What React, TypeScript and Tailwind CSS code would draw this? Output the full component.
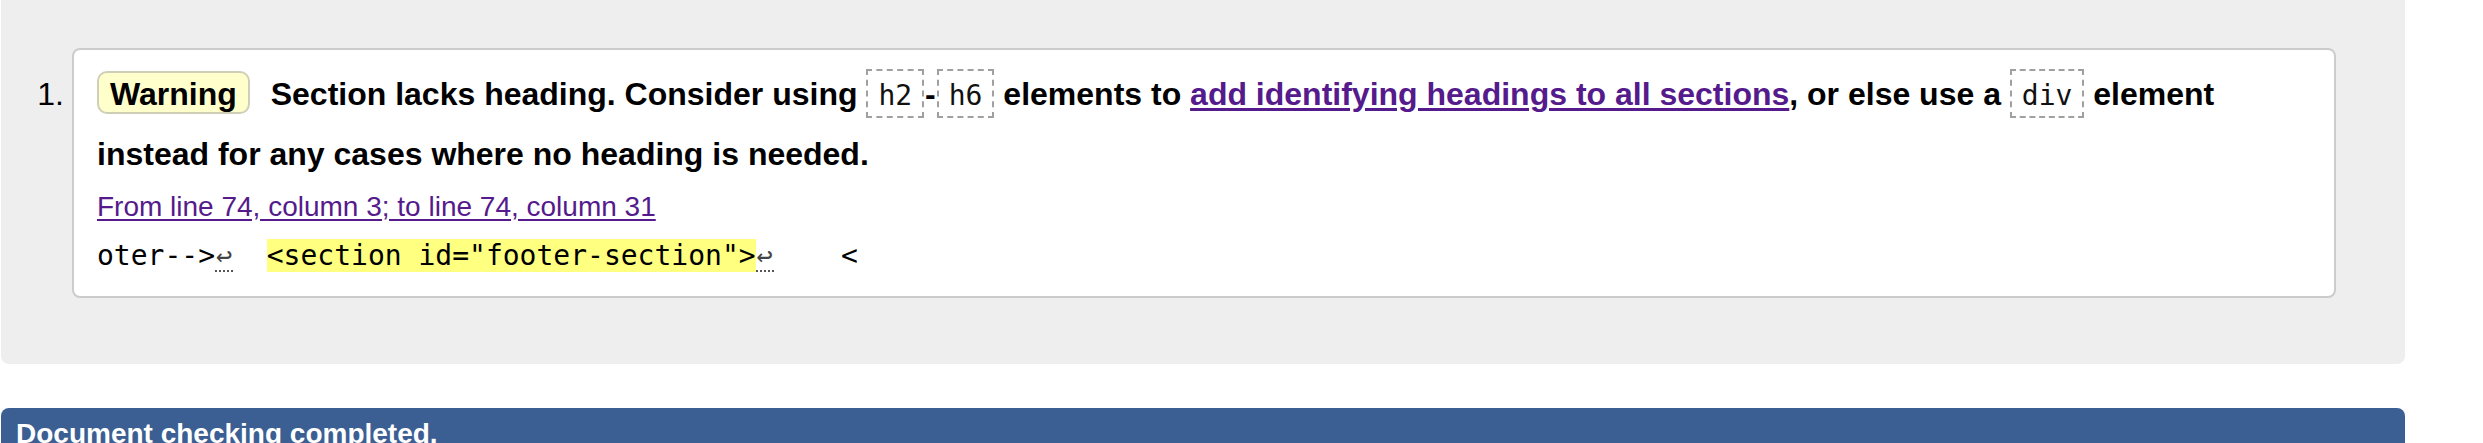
const sans = "font-['Liberation_Sans','Helvetica_Neue',Arial,sans-serif]";
const mono = "font-['DejaVu_Sans_Mono',Menlo,monospace]";

function Code({ children }: { children: string }) {
  return (
    <code
      className={`${mono} inline-block border-2 border-dashed border-[#a0a0a0] px-[10px] pt-[8px] pb-[3px] text-[28px] leading-[34px] font-normal text-[#111]`}
    >
      {children}
    </code>
  );
}

// validator's line-feed marker
function LineBreak() {
  return (
    <span className="inline-block w-[18px] border-b-2 border-dotted border-[#555] text-center text-[27px] leading-[28px] text-[#444]">
      ↩
    </span>
  );
}

export default function App() {
  return (
    <div className={`${sans} min-h-screen bg-white text-black`}>
      <section className="mr-[78px] ml-[1px] flex rounded-b-[8px] bg-[#eeeeee] pt-[48px] pb-[66px]">
        <div className="w-[71px] shrink-0 pt-[16px] pr-[8px] text-right text-[32px] leading-[60px]">
          1.
        </div>
        <div className="mr-[69px] flex-1 rounded-[8px] border-2 border-[#cccccc] bg-white px-[23px] pt-[14px] pb-[20px]">
          <p className="text-[32px] leading-[60px] font-bold">
            <span className="mr-[12px] inline-block rounded-[10px] border-2 border-[#cfcfb8] bg-[#ffffcc] px-[11px] pt-[4px] pb-[1px] leading-[34px]">
              Warning
            </span>{" "}
            Section lacks heading. Consider using <Code>h2</Code>
            <span className="mx-px">-</span>
            <Code>h6</Code> elements to{" "}
            <a href="#" className="text-[#551a8b] underline underline-offset-[3px]">
              add identifying headings to all sections
            </a>
            , or else use a <Code>div</Code> element instead for any cases where no heading is needed.
          </p>
          <p className="mt-[1px] text-[28px] leading-[44px]">
            <a href="#" className="text-[#551a8b] underline underline-offset-[3px]">
              From line 74, column 3; to line 74, column 31
            </a>
          </p>
          <p className={`${mono} mt-[7px] text-[28px] leading-[40px] whitespace-pre text-black`}>
            oter--&gt;
            <LineBreak />
            {"  "}
            <span className="bg-[#ffff80]">&lt;section id="footer-section"&gt;</span>
            <LineBreak />
            {"    <"}
          </p>
        </div>
      </section>
      <div className="mt-[44px] mr-[78px] ml-[1px] rounded-t-[8px] bg-[#3b5f93] px-[15px] pt-[8px] pb-[20px] text-[28px] leading-[36px] font-bold text-white">
        Document checking completed.
      </div>
    </div>
  );
}
